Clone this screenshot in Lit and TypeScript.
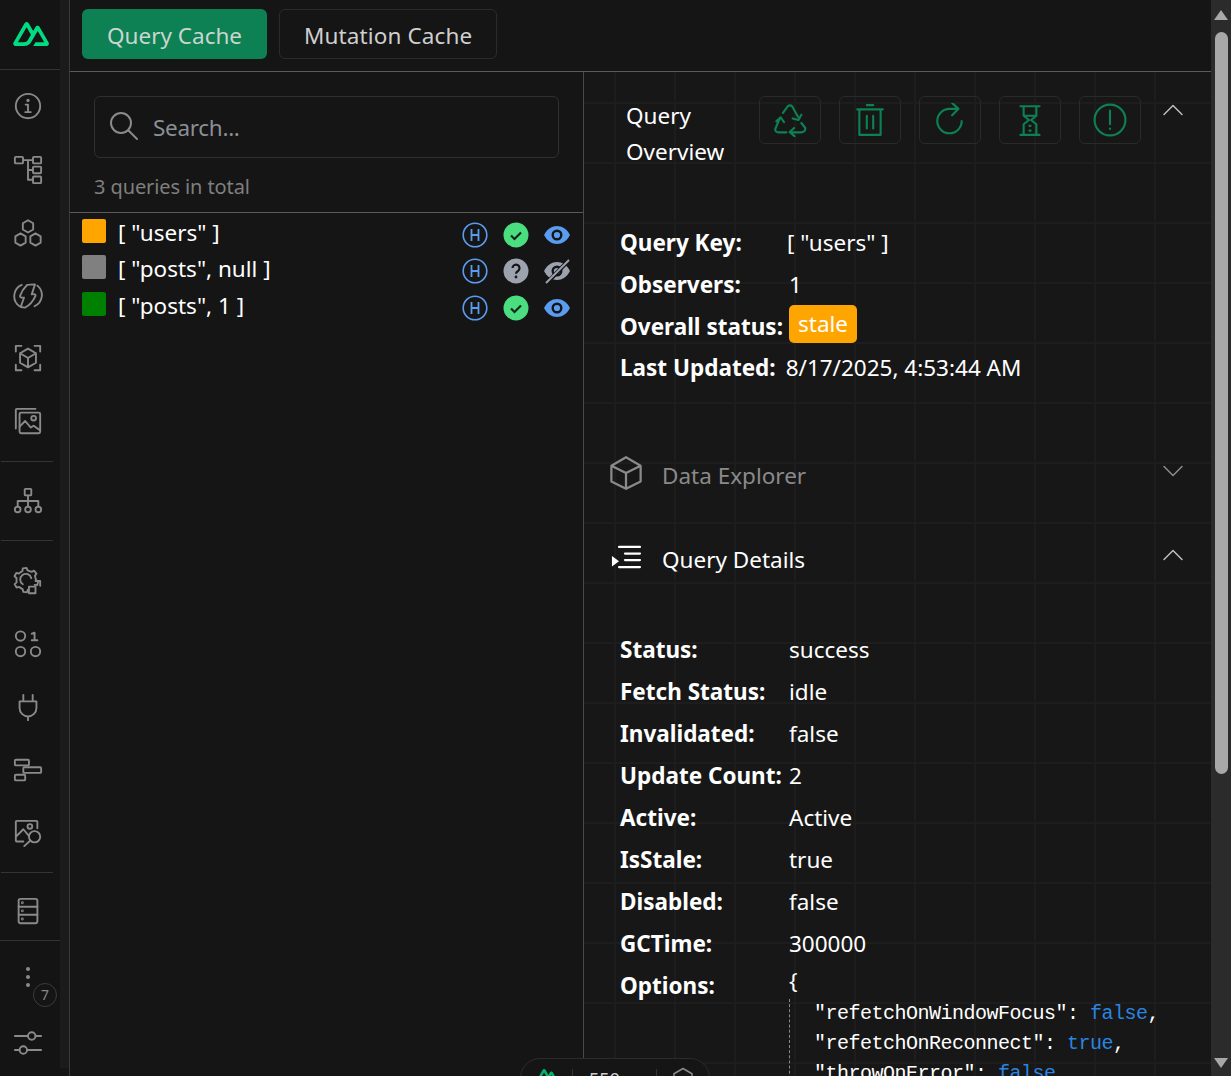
import { LitElement, html, css, svg } from "lit";
import { customElement } from "lit/decorators.js";

const ic = (size: number, body: unknown, cls = "") => html`<svg class=${cls} width=${size} height=${size} viewBox="0 0 32 32" fill="none" stroke="currentColor" stroke-width="2" stroke-linecap="round" stroke-linejoin="round">${body}</svg>`;

const NUXT = "M168 200H279C282.542 200 286.022 199.072 289.089 197.31C292.156 195.548 294.704 193.014 296.475 189.96C298.247 186.906 299.179 183.442 299.178 179.915C299.177 176.389 298.243 172.925 296.47 169.872L221.86 41.7187C220.089 38.6655 217.541 36.1302 214.474 34.3689C211.407 32.6076 207.928 31.6802 204.385 31.6802C200.843 31.6802 197.364 32.6076 194.297 34.3689C191.23 36.1302 188.682 38.6655 186.91 41.7187L168 74.2346L131.11 10.8387C129.337 7.78569 126.789 5.25009 123.721 3.48876C120.653 1.72744 117.173 0.800095 113.63 0.800095C110.088 0.800095 106.608 1.72744 103.54 3.48876C100.472 5.25009 97.924 7.78569 96.15 10.8387L4.34 169.872C2.567 172.925 1.633 176.389 1.632 179.915C1.631 183.442 2.563 186.906 4.335 189.96C6.106 193.014 8.654 195.548 11.721 197.31C14.788 199.072 18.268 200 21.81 200H91.53C119.155 200 139.53 187.801 153.55 164.07L187.58 105.79L205.81 74.29L260.51 168.22H187.58L168 200ZM89.07 168.19L40.42 168.18L113.35 42.9L149.74 105.54L125.37 147.37C116.06 162.58 105.47 168.19 89.07 168.19Z";
const nuxtLogo = (w: number) => html`<svg width=${w} height=${(w * 2) / 3} viewBox="0 0 300 200" fill="currentColor"><path d=${NUXT}/></svg>`;

function gearPath() {
  const cx = 14, cy = 15, ro = 13, ri = 10.5;
  const pts: string[] = [];
  for (let i = 0; i < 6; i++) {
    const a0 = 95 + i * 56;
    const seq: [number, number][] = [[a0 - 15, ri], [a0 - 9, ro], [a0 + 9, ro], [a0 + 15, ri]];
    for (const [a, r] of seq) {
      const t = (a * Math.PI) / 180;
      pts.push(`${(cx + r * Math.cos(t)).toFixed(1)} ${(cy + r * Math.sin(t)).toFixed(1)}`);
    }
  }
  return "M" + pts.join("L");
}

const sideTop = [
  svg`<circle cx="16" cy="16" r="13"/><path d="M16 14.500v8 M13.500 14.500H16 M13 22.500h6"/><circle cx="16" cy="10" r=".8" fill="currentColor"/>`,
  svg`<rect x="2" y="3" width="8.700" height="7" rx="1"/><rect x="21.300" y="3" width="8.700" height="7" rx="1"/><rect x="21.300" y="13.500" width="8.700" height="7" rx="1"/><rect x="21.300" y="24" width="8.700" height="7" rx="1"/><path d="M10.700 6.500h10.600 M16 6.500V27.500H21.300 M16 17h5.300"/>`,
  svg`<path d="M16 3.500l5.500 3.200v6.600l-5.500 3.200-5.500-3.200V6.700z M8 17.500l5.500 3.200v6.600L8 30.500l-5.500-3.200v-6.600z M24 17.500l5.500 3.200v6.600L24 30.500l-5.500-3.200v-6.600z"/>`,
  svg`<path d="M9.300 5.300A13 13 0 0 0 7 28 M26 6A13 13 0 0 1 23 28 M15 5.300Q17 4.600 23.500 4.600L20 15.300Q24.500 14.500 24 17 20 26 12.800 29.500L8.200 28.800 11.700 18.900Q7 19 7.500 17 10 10 15 5.300z"/>`,
  svg`<path d="M3 9V3h6 M23 3h6v6 M29 23v6h-6 M9 29H3v-6 M16 6l8.500 5v10L16 26l-8.500-5V11z M7.500 11 16 16l8.500-5 M16 16v10"/>`,
  svg`<path d="M3 24V4a1 1 0 0 1 1-1h20"/><rect x="7" y="7" width="22" height="22" rx="1.500"/><circle cx="22" cy="13" r="2.500"/><path d="M7 22l6-6 6 7 3-2 7 5"/>`,
];
const sideMid = svg`<rect x="12.500" y="3" width="7" height="7" rx=".8"/><path d="M16 10v6 M5 22v-6h22v6 M16 16v6"/><circle cx="5" cy="25" r="3"/><circle cx="16" cy="25" r="3"/><circle cx="27" cy="25" r="3"/>`;
const sideLow = [
  svg`<path d=${gearPath()}/><path d="M10.500 19.500A6 6 0 1 1 19.500 13"/><rect x="17" y="22" width="7" height="7"/><path d="M24 16h5v5"/>`,
  svg`<circle cx="8" cy="7.500" r="5"/><path d="M20 5l3-1v8 M20 12h6"/><circle cx="8" cy="24" r="5"/><circle cx="24" cy="24" r="5"/>`,
  svg`<path d="M11 3v7 M21 3v7 M7 10h18v7a9 9 0 0 1-18 0z M16 26v4" />`,
  svg`<rect x="2" y="5" width="15" height="6" rx="1"/><rect x="11" y="13" width="19" height="6" rx="1"/><rect x="2" y="21" width="11" height="6" rx="1"/>`,
  svg`<path d="M26 11V4a1 1 0 0 0-1-1H4a1 1 0 0 0-1 1v20a1 1 0 0 0 1 1h7 M3 20l8-8 6 7"/><circle cx="18" cy="9" r="2.500"/><circle cx="23" cy="20" r="6"/><path d="M18.500 24 12 30"/>`,
];
const server = svg`<rect x="6" y="3" width="20" height="26" rx="2"/><path d="M6 11.500h20 M6 20h20"/><circle cx="10" cy="7.200" r=".5"/><circle cx="10" cy="15.800" r=".5"/><circle cx="10" cy="24.500" r=".5"/>`;
const sliders = svg`<path d="M2 8.500h14 M24 8.500h6"/><circle cx="20" cy="8.500" r="4"/><path d="M2 23.500h5 M15 23.500h15"/><circle cx="11" cy="23.500" r="4"/>`;

const actions = [
  svg`<path d="M9.400 9.400 14 3q2-1.500 4 0l5.500 10 M26.700 11 24 16l-5.500-1.500 M12.600 27.600H4.700q-3-.5-2.500-3.400l4.100-9.500 M3.100 17.300l4.100-3.800 3.200 4.400 M15.700 27.600h11q4-.5 3.700-4.100l-3.700-4.700 M19.800 23.500l-4.100 3.800 4.700 4.100"/>`,
  svg`<path d="M13 2h6 M4 6h24 M6 6h20v24H6z M13 12v12 M19 12v12"/>`,
  svg`<path d="M27 17a11.500 11.500 0 1 1-11.500-11.500H24 M18 0l6 5.500-6 6"/>`,
  svg`<path d="M7 3h18 M7 30h18 M10 3v9l5 4-5 4v10 M22 3v9l-5 4 5 4v10 M10 12h12 M15.500 21.500h1 M15.500 26h1" />`,
  svg`<circle cx="16" cy="16" r="14.500"/><path d="M16 7v13 M16 24v.5"/>`,
];

const rows: [string, string, string, boolean][] = [
  ['[ "users" ]', "#ffa500", "ok", true],
  ['[ "posts", null ]', "#808080", "q", false],
  ['[ "posts", 1 ]', "#008000", "ok", true],
];
const details: [string, string][] = [
  ["Status:", "success"], ["Fetch Status:", "idle"], ["Invalidated:", "false"], ["Update Count:", "2"],
  ["Active:", "Active"], ["IsStale:", "true"], ["Disabled:", "false"], ["GCTime:", "300000"],
];

@customElement("app-root")
export class AppRoot extends LitElement {
  static styles = css`
    :host { display: block; height: 1076px; overflow: hidden; position: relative; background: #151515; color: #fff; font-family: "Noto Sans", "Open Sans", sans-serif; }
    .page { display: flex; height: 1076px; }
    .side { width: 60px; flex: none; display: flex; flex-direction: column; color: #8a8a8a; background: #141414; }
    .gutter { width: 9px; flex: none; background: #1b1b1b; height: 1068px; }
    .vline { width: 1px; flex: none; background: #3a3a3a; }
    .logo { flex: none; display: flex; align-items: center; justify-content: center; padding: 0 0 2px 2px; color: #00dc82; border-bottom: 1px solid #333; height: 67px; }
    .group { display: flex; flex-direction: column; align-items: center; margin-right: 4px; }
    .btn { height: 63px; display: flex; align-items: center; justify-content: center; }
    .div { height: 1px; background: #343434; margin: 0 7px 0 1px; flex: none; }
    .g1 { padding: 4px 0 9px; }
    .g2 { padding: 7px 0 8px; }
    .g3 { padding: 8px 0; }
    .g4 { padding: 15px 0 0; height: 67px; box-sizing: border-box; }
    .g4 .btn { height: 46px; }
    .full { height: 1px; background: #343434; flex: none; }
    .more { display: flex; flex-direction: column; align-items: center; position: relative; height: 72px; padding-right: 4px; padding-top: 26px; box-sizing: border-box; }
    .dots { display: flex; flex-direction: column; gap: 4px; }
    .dots i { width: 4px; height: 4px; border-radius: 50%; background: #8a8a8a; display: block; }
    .count { position: absolute; left: 33px; top: 42px; width: 22px; height: 22px; border: 1px solid #3c3c3c; border-radius: 50%; font-size: 14px; line-height: 22px; text-align: center; color: #888; background: #151515; }
    .slider { display: flex; justify-content: center; padding-right: 4px; padding-top: 15px; }

    .main { flex: 1; display: flex; flex-direction: column; min-width: 0; }
    .tabs { height: 72px; flex: none; box-sizing: border-box; border-bottom: 1px solid #5a5a5a; display: flex; gap: 12px; padding: 9px 12px; }
    .tab { height: 50px; box-sizing: border-box; border-radius: 6px; font-size: 22.500px; line-height: 52px; padding: 0 24px; border: 1px solid #2b2b2b; color: #cfcfcf; letter-spacing: .12px; }
    .tab.on { background: #0d8153; border: none; color: #c9d6d0; padding: 0 25px; letter-spacing: 0; line-height: 54px; }
    .content { flex: 1; display: flex; min-height: 0; }
    .left { width: 513px; flex: none; border-right: 1px solid #4a4a4a; display: flex; flex-direction: column; }
    .leftTop { height: 141px; flex: none; box-sizing: border-box; border-bottom: 1px solid #5a5a5a; padding: 24px 24px 0; }
    .search { height: 62px; box-sizing: border-box; border: 1px solid #2f2f2f; border-radius: 6px; display: flex; align-items: center; padding: 0 13px; gap: 13px; color: #8b8f96; font-size: 22.500px; }
    .search svg { color: #8a8a8a; margin-top: -2px; }
    .search span { letter-spacing: -.3px; }
    .total { font-size: 20px; color: #7f7f7f; margin-top: 14px; line-height: 30px; letter-spacing: -.1px; }
    .list { padding-top: 1.600px; }
    .row { height: 36.500px; display: flex; align-items: center; padding: 0 12px; font-size: 22.500px; color: #fff; }
    .sw { width: 24px; height: 24px; border-radius: 2px; flex: none; margin-right: 12px; margin-top: -4px; }
    .key { flex: 1; margin-top: -1px; }
    .ri { display: flex; align-items: center; width: 109px; justify-content: space-between; flex: none; margin-top: 4px; }
    .ri svg { display: block; }

    .right { flex: 1; min-width: 0; background-color: #171717; background-image: linear-gradient(#1d1d1d 2px, transparent 2px), linear-gradient(90deg, #1d1d1d 2px, transparent 2px); background-size: 60px 60px; background-position: 30px 30px; overflow: hidden; }
    .head { display: flex; padding: 24px 26px 0 42px; height: 149px; box-sizing: border-box; }
    .title { width: 133px; flex: none; font-size: 22.500px; line-height: 36px; margin-top: 2px; }
    .acts { display: flex; gap: 18px; }
    .act { width: 62px; height: 48px; box-sizing: border-box; border: 1px solid #2a2a2a; border-radius: 6px; color: #0d8153; display: flex; align-items: center; justify-content: center; }
    .chev { color: #bdbdbd; margin-left: auto; margin-top: 2px; height: 24px; }
    .info { padding: 0 36px; display: grid; grid-template-columns: 169px 1fr; grid-auto-rows: 42px; font-size: 22.500px; align-items: center; }
    .info b { font-weight: 700; }
    .vk { margin-left: -2px; }
    .bw { margin-bottom: 4px; }
    .badge { background: #ffa500; border-radius: 5px; padding: 0 9px; line-height: 38px; height: 38px; display: inline-block; }
    .lu { display: flex; gap: 10px; height: 42px; margin-top: -1px; align-items: center; font-size: 22.500px; padding: 0 36px; }
    .sec { display: flex; align-items: center; height: 36px; padding: 0 26px 0 23px; font-size: 22.500px; gap: 19px; }
    .sec > svg { margin-top: -4px; flex: none; }
    .sec.dim { color: #8a8a8a; margin-top: 69px; }
    .sec.dim > svg { margin-left: 1px; margin-right: -1px; }
    .sec.det { margin-top: 48px; margin-bottom: 51px; }
    .sec .tail { margin-left: auto; color: #8c8c8c; height: 24px; margin-top: -8px; }
    .det .tail { color: #bdbdbd; }
    .opts { display: flex; padding: 0 36px; font-size: 22.500px; margin-top: 0; }
    .opts b { width: 169px; flex: none; line-height: 42px; padding-top: 1px; height: 41px; }
    .brace { line-height: 36px; margin-top: -1px; }
    .json { font-family: "Liberation Mono", "DejaVu Sans Mono", monospace; font-size: 20px; letter-spacing: -.5px; line-height: 30px; white-space: pre; border-left: 1px dashed #8a8a8a; padding-left: 24px; height: 90px; overflow: hidden; }
    .json span { color: #2a85e0; }

    .scroll { width: 20px; flex: none; background: #2b2b2b; position: relative; display: flex; flex-direction: column; align-items: center; }
    .arrow { width: 0; height: 0; border-left: 7px solid transparent; border-right: 7px solid transparent; }
    .arrow.up { border-bottom: 10px solid #a8a8a8; margin-top: 10px; }
    .arrow.down { border-top: 10px solid #a8a8a8; position: absolute; bottom: 8px; }
    .thumb { width: 13px; height: 742px; background: #a8a8a8; border-radius: 7px; margin-top: 12px; }

    .pill { position: absolute; left: 520px; top: 1058px; width: 190px; height: 40px; box-sizing: border-box; background: #151515; border: 1px solid #2b2b2b; border-radius: 20px; display: flex; align-items: flex-start; padding: 10px 0 0; font-size: 18px; color: #ccc; }
    .pl { width: 52px; flex: none; display: flex; justify-content: center; color: #00b56b; box-sizing: border-box; height: 20px; border-right: 1px solid #333; }
    .pm { width: 84px; flex: none; box-sizing: border-box; text-align: center; padding-right: 20px; line-height: 20px; height: 20px; border-right: 1px solid #333; }
    .pr { flex: 1; display: flex; justify-content: center; color: #8a8a8a; margin-top: -2px; }
  `;

  render() {
    return html`
      <div class="page">
        <nav class="side">
          <div class="logo">${nuxtLogo(36)}</div>
          <div class="group g1">${sideTop.map((b) => html`<div class="btn">${ic(30, b)}</div>`)}</div>
          <div class="div"></div>
          <div class="group g2"><div class="btn">${ic(30, sideMid)}</div></div>
          <div class="div"></div>
          <div class="group g3">${sideLow.map((b) => html`<div class="btn">${ic(30, b)}</div>`)}</div>
          <div class="div"></div>
          <div class="group g4"><div class="btn">${ic(30, server)}</div></div>
          <div class="full"></div>
          <div class="more">
            <div class="dots"><i></i><i></i><i></i></div>
            <div class="count">7</div>
          </div>
          <div class="slider">${ic(30, sliders)}</div>
        </nav>
        <div class="gutter"></div>
        <div class="vline"></div>
        <main class="main">
          <div class="tabs">
            <div class="tab on">Query Cache</div>
            <div class="tab">Mutation Cache</div>
          </div>
          <div class="content">
            <section class="left">
              <div class="leftTop">
                <div class="search">${ic(32, svg`<circle cx="13" cy="13" r="10"/><path d="M20.500 20.500 29 29"/>`)}<span>Search...</span></div>
                <div class="total">3 queries in total</div>
              </div>
              <div class="list">
                ${rows.map((r) => html`
                  <div class="row">
                    <span class="sw" style="background:${r[1]}"></span>
                    <span class="key">${r[0]}</span>
                    <span class="ri">
                      <svg width="26" height="26" viewBox="0 0 26 26" fill="none" stroke="#5a9cf0" stroke-width="1.600"><circle cx="13" cy="13" r="11.800"/><path d="M9.500 7v12 M16.500 7v12 M9.500 13h7" stroke-width="1.800"/></svg>
                      ${r[2] === "ok"
                        ? html`<svg width="26" height="26" viewBox="0 0 26 26"><circle cx="13" cy="13" r="12.500" fill="#4ade80"/><path d="M8 13.500l3.500 3.500 6.500-6.500" fill="none" stroke="#14271c" stroke-width="2.200"/></svg>`
                        : html`<svg width="26" height="26" viewBox="0 0 26 26"><circle cx="13" cy="13" r="12.500" fill="#9ca3af"/><path d="M9.500 10a3.500 3.500 0 1 1 5.500 3c-1.300.8-2 1.300-2 2.800" fill="none" stroke="#151515" stroke-width="2.200"/><circle cx="13" cy="19" r="1.400" fill="#151515"/></svg>`}
                      ${r[3]
                        ? html`<svg width="28" height="20" viewBox="0 0 28 20"><path d="M1 10C4 4 9 1 14 1s10 3 13 9c-3 6-8 9-13 9S4 16 1 10z" fill="#5a9cf0"/><circle cx="14" cy="10" r="4.300" fill="none" stroke="#151515" stroke-width="2.400"/></svg>`
                        : html`<svg width="28" height="26" viewBox="0 0 28 26"><path d="M1 13C4 7 9 4 14 4s10 3 13 9c-3 6-8 9-13 9S4 19 1 13z" fill="#9ca3af"/><circle cx="14" cy="13" r="4.300" fill="none" stroke="#151515" stroke-width="2.400"/><path d="M3 26 26 2" stroke="#151515" stroke-width="4"/><path d="M3 25 26 2" stroke="#9ca3af" stroke-width="2"/></svg>`}
                    </span>
                  </div>`)}
              </div>
            </section>
            <section class="right">
              <div class="head">
                <div class="title">Query Overview</div>
                <div class="acts">${actions.map((a) => html`<div class="act">${ic(34, a)}</div>`)}</div>
                <div class="chev">${ic(24, svg`<path d="M4 22 16 10l12 12"/>`)}</div>
              </div>
              <div class="info">
                <b>Query Key:</b><span class="vk">[ "users" ]</span>
                <b>Observers:</b><span>1</span>
                <b>Overall status:</b><span class="bw"><span class="badge">stale</span></span>
              </div>
              <div class="lu"><b>Last Updated:</b><span>8/17/2025, 4:53:44 AM</span></div>
              <div class="sec dim">${ic(36, svg`<path d="M16 2l13 7.500v14L16 30 3 23.500v-14z M3 9.500 16 16l13-6.500 M16 16v14"/>`)}<span>Data Explorer</span><span class="tail">${ic(24, svg`<path d="M4 10l12 12 12-12"/>`)}</span></div>
              <div class="sec det">${ic(36, svg`<path d="M10.700 7h18.600 M16 12.900h13.300 M16 18.700h13.300 M10.700 24.900h18.600"/><path d="M4.400 15v9.500l6.300-4.750z" fill="currentColor" stroke="none"/>`)}<span>Query Details</span><span class="tail">${ic(24, svg`<path d="M4 22 16 10l12 12"/>`)}</span></div>
              <div class="info">${details.map((o) => html`<b>${o[0]}</b><span>${o[1]}</span>`)}</div>
              <div class="opts"><b>Options:</b><div><div class="brace">{</div><div class="json">"refetchOnWindowFocus": <span>false</span>,
"refetchOnReconnect": <span>true</span>,
"throwOnError": <span>false</span>,</div></div></div>
            </section>
          </div>
        </main>
        <aside class="scroll"><div class="arrow up"></div><div class="thumb"></div><div class="arrow down"></div></aside>
      </div>
      <div class="pill"><span class="pl">${nuxtLogo(24)}</span><span class="pm">559</span><span class="pr">${ic(24, svg`<path d="M16 2l12 7v14l-12 7-12-7V9z"/>`)}</span></div>
    `;
  }
}
